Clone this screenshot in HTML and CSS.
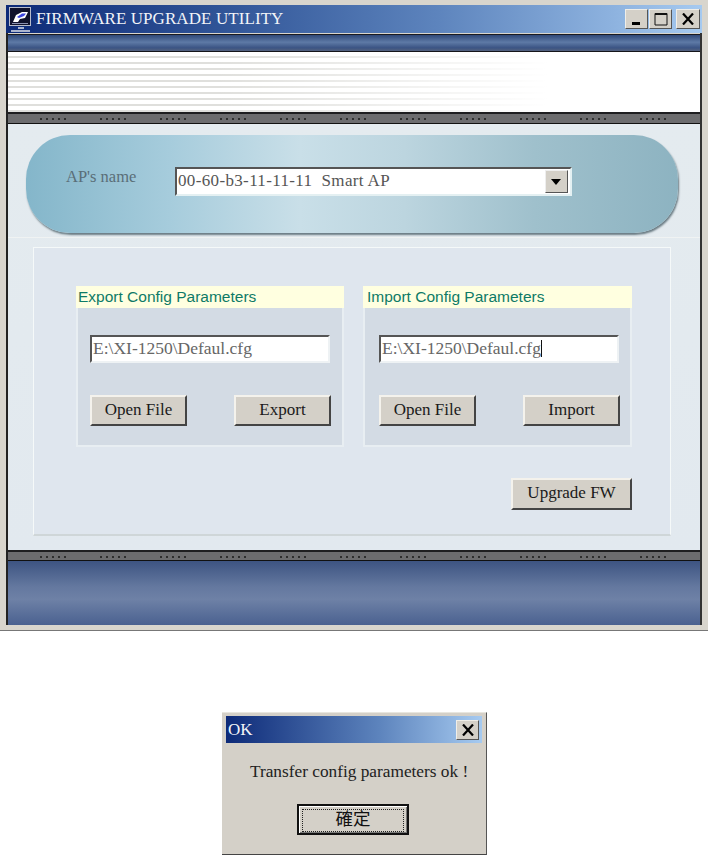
FILE: index.html
```html
<!DOCTYPE html>
<html lang="en">
<head>
    <meta charset="UTF-8">
    <meta name="viewport" content="width=device-width, initial-scale=1.0">
    <title>Firmware Upgrade Utility</title>
    <link rel="stylesheet" href="styles.css">
</head>
<body>
    <div class="window">
        <div class="titlebar">
            <svg class="app-icon" width="24" height="25" viewBox="0 0 24 25">
                <rect x="0.500" y="0.500" width="21" height="18" fill="#10122c" stroke="#b8bccb"/>
                <path d="M4 15 L7 8 L13 5 L19 5 L16 11 L11 12 L9 15 Z" fill="#fff"/>
                <path d="M8 10 L13 6.500 L17 6.500 L15 9 L10 11 Z" fill="#3d46e0"/>
                <path d="M3 16.500 H19" stroke="#8a90b0" stroke-width="1"/>
                <path d="M9 21 H15 M2 24 H21" stroke="#dfe2ea" stroke-width="1.500"/>
            </svg>
            <span class="title-text">FIRMWARE UPGRADE UTILITY</span>
            <div class="win-buttons">
                <div class="win-btn"><svg width="12" height="12" viewBox="0 0 12 12"><rect x="1" y="9" width="8" height="3" fill="#000"/></svg></div>
                <div class="win-btn"><svg width="14" height="14" viewBox="0 0 14 14"><path d="M1 1.500 H13 V13 H1 Z" fill="none" stroke="#111" stroke-width="1"/><path d="M1 2 H13" stroke="#111" stroke-width="2"/></svg></div>
                <div class="win-btn win-btn-close"><svg width="14" height="12" viewBox="0 0 14 12"><path d="M2 0.500 L12 11.500 M12 0.500 L2 11.500" stroke="#000" stroke-width="2.200"/></svg></div>
            </div>
        </div>

        <div class="inner">
            <div class="top-bar"></div>
            <div class="banner"></div>
            <svg class="rail" width="100%" height="12">
                <defs>
                    <pattern id="ticks" width="60" height="12" patternUnits="userSpaceOnUse" x="32">
                        <rect x="0" y="6" width="2" height="2" fill="#2e2e2e"/>
                        <rect x="6" y="6" width="2" height="2" fill="#2e2e2e"/>
                        <rect x="12" y="6" width="2" height="2" fill="#2e2e2e"/>
                        <rect x="18" y="6" width="2" height="2" fill="#2e2e2e"/>
                        <rect x="24" y="6" width="2" height="2" fill="#2e2e2e"/>
                    </pattern>
                </defs>
                <rect width="100%" height="12" fill="#6c6c6e"/>
                <rect width="100%" height="2" fill="#1e1e20"/>
                <rect y="11" width="100%" height="1" fill="#111"/>
                <rect width="100%" height="12" fill="url(#ticks)"/>
            </svg>

            <div class="content">
                <div class="pill">
                    <span class="pill-label">AP's name</span>
                    <div class="select">
                        <span class="select-value">00-60-b3-11-11-11&nbsp; Smart AP</span>
                        <div class="select-arrow"></div>
                    </div>
                </div>
                <div class="divider"></div>
                <div class="panel">
                    <div class="groups">
                        <div class="group">
                            <div class="group-head">Export Config Parameters</div>
                            <div class="group-body">
                                <div class="field">E:\XI-1250\Defaul.cfg</div>
                                <div class="btn-row">
                                    <button class="btn">Open File</button>
                                    <button class="btn">Export</button>
                                </div>
                            </div>
                        </div>
                        <div class="group group-import">
                            <div class="group-head">Import Config Parameters</div>
                            <div class="group-body">
                                <div class="field">E:\XI-1250\Defaul.cfg<span class="caret"></span></div>
                                <div class="btn-row">
                                    <button class="btn">Open File</button>
                                    <button class="btn">Import</button>
                                </div>
                            </div>
                        </div>
                    </div>
                    <div class="upgrade-row">
                        <button class="btn btn-upgrade">Upgrade FW</button>
                    </div>
                </div>
            </div>

            <svg class="rail rail-bottom" width="100%" height="11">
                <rect width="100%" height="11" fill="#6c6c6e"/>
                <rect width="100%" height="2" fill="#1e1e20"/>
                <rect y="10" width="100%" height="1" fill="#111"/>
                <rect width="100%" height="11" fill="url(#ticks)"/>
            </svg>
            <div class="footer"></div>
        </div>
    </div>

    <div class="dialog">
        <div class="dialog-title">
            <span>OK</span>
            <div class="win-btn dialog-close"><svg width="14" height="12" viewBox="0 0 14 12"><path d="M2 0.500 L12 11.500 M12 0.500 L2 11.500" stroke="#000" stroke-width="2.200"/></svg></div>
        </div>
        <div class="dialog-msg">Transfer config parameters ok !</div>
        <div class="dialog-actions">
            <button class="dialog-btn"><span class="dialog-btn-focus">確定</span></button>
        </div>
    </div>
</body>
</html>
```

FILE: styles.css
```css
body {
    margin: 0;
    background: #fff;
    font-family: "Liberation Serif", serif;
    color: #222;
}
.window {
    width: 708px;
    height: 631px;
    box-sizing: border-box;
    padding: 5px 6px 5px 6px;
    background: #d8d5cd;
    border-bottom: 1px solid #777;
    display: flex;
    flex-direction: column;
}
.titlebar {
    height: 28px;
    flex: none;
    display: flex;
    align-items: center;
    padding: 0 2px 0 3px;
    background: linear-gradient(90deg, #0d2a78 0%, #2f5396 30%, #5d84bd 62%, #a6caf0 100%);
    color: #f2f4f8;
}
.app-icon {
    flex: none;
    margin-right: 3px;
}
.title-text {
    font-size: 17px;
    letter-spacing: 0.080px;
    white-space: nowrap;
}
.win-buttons {
    margin-left: auto;
    display: flex;
    gap: 1px;
}
.win-btn {
    width: 23px;
    height: 20px;
    box-sizing: border-box;
    display: flex;
    align-items: center;
    justify-content: center;
    background: #d4d0c8;
    border: 1px solid;
    border-color: #f0eee8 #555 #555 #f0eee8;
}
.win-btn-close {
    margin-left: 3px;
    width: 24px;
}
.inner {
    flex: 1;
    display: flex;
    flex-direction: column;
    border-left: 2px solid #222;
    border-right: 2px solid #333;
}
.top-bar {
    height: 18px;
    flex: none;
    box-sizing: border-box;
    margin: 1px 0 0;
    border-top: 1px solid #1a1a20;
    border-bottom: 1px solid #15151a;
    background: linear-gradient(180deg, #2f4878 0%, #5e7aa6 45%, #3b5484 80%, #54627e 100%);
}
.banner {
    height: 60px;
    flex: none;
    background:
        linear-gradient(90deg, rgba(255,255,255,0) 0%, rgba(255,255,255,0) 30%, #fff 78%),
        repeating-linear-gradient(180deg, #fff 0, #fff 4px, #dfdfdc 4px, #dfdfdc 6px);
}
.rail {
    display: block;
    flex: none;
}
.content {
    height: 426px;
    flex: none;
    box-sizing: border-box;
    padding-top: 11px;
    background: linear-gradient(180deg, #e4ebef 0%, #e2e9ef 100%);
}
.pill {
    width: 652px;
    height: 98px;
    box-sizing: border-box;
    margin-left: 18px;
    padding: 0 106px 6px 40px;
    display: flex;
    align-items: center;
    border-radius: 44px;
    background: linear-gradient(90deg, #84b6ca 0%, #a6ccdc 22%, #c9dfe8 42%, #bcd5df 58%, #9fc0cc 78%, #8db3c1 100%);
    box-shadow: 1px 2px 2px #6a7c84;
}
.pill-label {
    width: 109px;
    flex: none;
    font-size: 16.500px;
    color: #5a6e78;
    margin-top: -8px;
}
.select {
    flex: 1;
    height: 29px;
    box-sizing: border-box;
    display: flex;
    align-items: center;
    justify-content: space-between;
    padding: 0 2px 0 1px;
    background: #fff;
    border: 2px solid;
    border-color: #555 #e4f0f2 #e4f0f2 #555;
}
.select-value {
    font-size: 17px;
    color: #555;
    letter-spacing: 0.350px;
}
.select-arrow {
    width: 23px;
    height: 23px;
    box-sizing: border-box;
    background: #d4d0c8;
    border: 1px solid;
    border-color: #eee #555 #555 #eee;
    position: relative;
}
.select-arrow::after {
    content: "";
    position: absolute;
    left: 5px;
    top: 8px;
    border: 5px solid transparent;
    border-top: 6px solid #000;
    border-bottom: 0;
}
.divider {
    height: 1px;
    margin-top: 4px;
    background: #f0f3f3;
}
.panel {
    width: 638px;
    height: 289px;
    box-sizing: border-box;
    margin: 9px 0 0 25px;
    padding: 38px 38px 0 42px;
    background: #dfe6ee;
    border: 1px solid #f5f9f9;
    border-bottom: 2px solid #cfd6d8;
}
.groups {
    display: flex;
    gap: 19px;
}
.group {
    width: 268px;
    box-sizing: border-box;
    background: #e8eef2;
    padding: 0 2px 2px;
}
.group-import {
    width: 269px;
}
.group-head {
    height: 22px;
    margin: 0 -2px;
    padding-left: 2px;
    background: #ffffe0;
    font-family: "Liberation Sans", sans-serif;
    font-size: 15.500px;
    line-height: 22px;
    color: #0e7a66;
    white-space: nowrap;
}
.group-import .group-head {
    padding-left: 4px;
}
.group-body {
    height: 137px;
    box-sizing: border-box;
    padding: 27px 12px 0;
    background: #d3dbe4;
}
.group-import .group-body {
    padding-left: 14px;
    padding-right: 10px;
}
.field {
    width: 240px;
    height: 28px;
    box-sizing: border-box;
    padding-left: 1px;
    background: #fff;
    border: 2px solid;
    border-color: #555 #eef2f4 #eef2f4 #555;
    font-size: 17.500px;
    line-height: 22px;
    color: #666;
    white-space: nowrap;
}
.caret {
    display: inline-block;
    width: 1px;
    height: 17px;
    background: #111;
    vertical-align: -3px;
}
.btn-row {
    display: flex;
    justify-content: space-between;
    width: 241px;
    margin-top: 32px;
}
.btn {
    width: 97px;
    height: 31px;
    padding: 0 0 2px;
    background: #d4d0c8;
    border: 2px solid;
    border-color: #f4f2ec #444 #444 #f4f2ec;
    font-family: "Liberation Serif", serif;
    font-size: 17px;
    color: #1a1a1a;
}
.upgrade-row {
    display: flex;
    justify-content: flex-end;
    margin-top: 31px;
}
.btn-upgrade {
    width: 121px;
    height: 32px;
}
.footer {
    flex: 1;
    background: linear-gradient(180deg, #3d5482 0%, #64789f 40%, #6e81a6 60%, #4a6190 100%);
}
.dialog {
    width: 265px;
    height: 143px;
    box-sizing: border-box;
    margin: 81px 0 0 222px;
    padding: 3px 4px 0;
    background: #d4d0c8;
    border-top: 1px solid #e8e6df;
    border-right: 1px solid #555;
    border-bottom: 1px solid #444;
}
.dialog-title {
    height: 27px;
    display: flex;
    align-items: center;
    justify-content: space-between;
    padding: 0 3px 0 2px;
    background: linear-gradient(90deg, #0d2a78 0%, #5d84bd 60%, #a6caf0 100%);
    color: #f2f4f8;
    font-size: 17px;
}
.dialog-close {
    width: 23px;
    height: 20px;
}
.dialog-msg {
    margin: 19px 0 0 24px;
    font-size: 17.300px;
    color: #222;
    white-space: nowrap;
}
.dialog-actions {
    margin-top: 22px;
    display: flex;
    padding-left: 71px;
}
.dialog-btn {
    width: 112px;
    height: 31px;
    padding: 2px;
    background: #d4d0c8;
    border: 2px solid;
    border-color: #111 #111 #111 #111;
    box-shadow: inset 1px 1px 0 #fff, inset -1px -1px 0 #777;
}
.dialog-btn-focus {
    display: block;
    height: 21px;
    margin: 1px;
    border: 1px dotted #222;
    font-family: "Liberation Sans", "Noto Sans CJK TC", sans-serif;
    font-size: 17.500px;
    line-height: 18px;
    color: #111;
}
```
